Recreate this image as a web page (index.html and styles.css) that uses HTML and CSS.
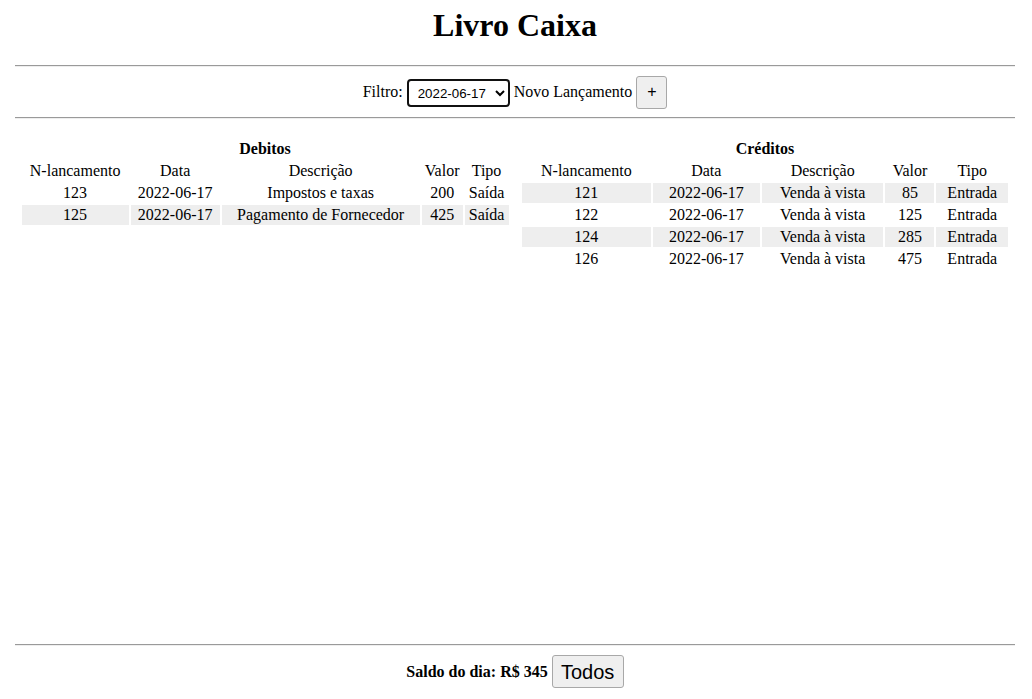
FILE: index.html
```html
<!DOCTYPE html>
<html lang="pt-BR">
<head>
<meta charset="utf-8">
<title>Livro Caixa</title>
<link rel="stylesheet" href="styles.css">
</head>
<body>
<div class="page">
  <h1 class="title">Livro Caixa</h1>
  <hr class="rule rule-top">
  <div class="toolbar">
    <span>Filtro:</span>
    <select class="date-select">
      <option>2022-06-17</option>
    </select>
    <span>Novo Lançamento</span>
    <button class="btn btn-add">+</button>
  </div>
  <hr class="rule rule-mid">
  <main class="tables">
    <section class="col">
      <table class="ledger debits">
        <caption>Debitos</caption>
        <colgroup>
          <col class="c-d1"><col class="c-d2"><col class="c-d3"><col class="c-d4"><col class="c-d5">
        </colgroup>
        <thead>
          <tr><td>N-lancamento</td><td>Data</td><td>Descrição</td><td>Valor</td><td>Tipo</td></tr>
        </thead>
        <tbody>
          <tr><td>123</td><td>2022-06-17</td><td>Impostos e taxas</td><td>200</td><td>Saída</td></tr>
          <tr class="shade"><td>125</td><td>2022-06-17</td><td>Pagamento de Fornecedor</td><td>425</td><td>Saída</td></tr>
        </tbody>
      </table>
    </section>
    <section class="col">
      <table class="ledger credits">
        <caption>Créditos</caption>
        <colgroup>
          <col class="c-c1"><col class="c-c2"><col class="c-c3"><col class="c-c4"><col class="c-c5">
        </colgroup>
        <thead>
          <tr><td>N-lancamento</td><td>Data</td><td>Descrição</td><td>Valor</td><td>Tipo</td></tr>
        </thead>
        <tbody>
          <tr class="shade"><td>121</td><td>2022-06-17</td><td>Venda à vista</td><td>85</td><td>Entrada</td></tr>
          <tr><td>122</td><td>2022-06-17</td><td>Venda à vista</td><td>125</td><td>Entrada</td></tr>
          <tr class="shade"><td>124</td><td>2022-06-17</td><td>Venda à vista</td><td>285</td><td>Entrada</td></tr>
          <tr><td>126</td><td>2022-06-17</td><td>Venda à vista</td><td>475</td><td>Entrada</td></tr>
        </tbody>
      </table>
    </section>
  </main>
  <hr class="rule rule-bottom">
  <footer class="footer">
    <strong>Saldo do dia: R$ 345</strong>
    <button class="btn btn-all">Todos</button>
  </footer>
</div>
</body>
</html>
```

FILE: styles.css
```css
html, body {
  margin: 0;
  padding: 0;
  background: #fff;
}

body {
  font-family: "Liberation Serif", "Times New Roman", serif;
  font-size: 16px;
  color: #000;
}

.page {
  min-height: 100vh;
  box-sizing: border-box;
  padding: 7px 17px 11px 15px;
  display: flex;
  flex-direction: column;
}

.title {
  margin: 0;
  text-align: center;
  font-size: 32px;
  font-weight: bold;
  line-height: 37px;
}

.rule {
  margin: 0;
  border: none;
  border-top: 1px solid #9a9a9a;
  border-bottom: 1px solid #eee;
  height: 0;
}

.rule-top {
  margin-top: 21px;
}

.toolbar {
  display: flex;
  align-items: center;
  justify-content: center;
  gap: 4px;
  height: 34px;
  margin: 8px 0 8px;
}

.date-select {
  font-family: "Liberation Sans", Arial, sans-serif;
  font-size: 13.333px;
  color: #000;
  height: 28px;
  width: 103px;
  padding: 0 4px 0 5px;
  border: 2px solid #111;
  border-radius: 4px;
  background: #fff;
  margin-top: 2px;
}

.btn {
  font-family: "Liberation Sans", Arial, sans-serif;
  background: #efefef;
  border: 1px solid #a8a8a8;
  border-radius: 3px;
  color: #000;
  padding: 0;
}

.btn-add {
  width: 31px;
  height: 33px;
  font-size: 16px;
  line-height: 1;
}

.tables {
  flex: 1;
  display: flex;
  align-items: flex-start;
  padding-top: 21px;
}

.col {
  width: 50%;
  display: flex;
  justify-content: center;
}

.ledger {
  border-spacing: 2px;
  table-layout: fixed;
  text-align: center;
}

.debits {
  width: 491px;
}

.credits {
  width: 490px;
}

.ledger caption {
  font-weight: bold;
  line-height: 18px;
  padding-bottom: 1px;
}

.ledger td {
  padding: 1px;
  line-height: 18px;
  white-space: nowrap;
}

.ledger .shade td {
  background: #eeeeee;
}

.c-d1 { width: 105px; }
.c-d2 { width: 87px; }
.c-d3 { width: 194px; }
.c-d4 { width: 40px; }
.c-d5 { width: 43px; }

.c-c1 { width: 126px; }
.c-c2 { width: 105px; }
.c-c3 { width: 119px; }
.c-c4 { width: 48px; }
.c-c5 { width: 70px; }

.footer {
  display: flex;
  align-items: center;
  justify-content: center;
  gap: 4px;
  margin-top: 9px;
}

.btn-all {
  width: 72px;
  height: 33px;
  font-size: 20px;
  line-height: 1;
}
```
